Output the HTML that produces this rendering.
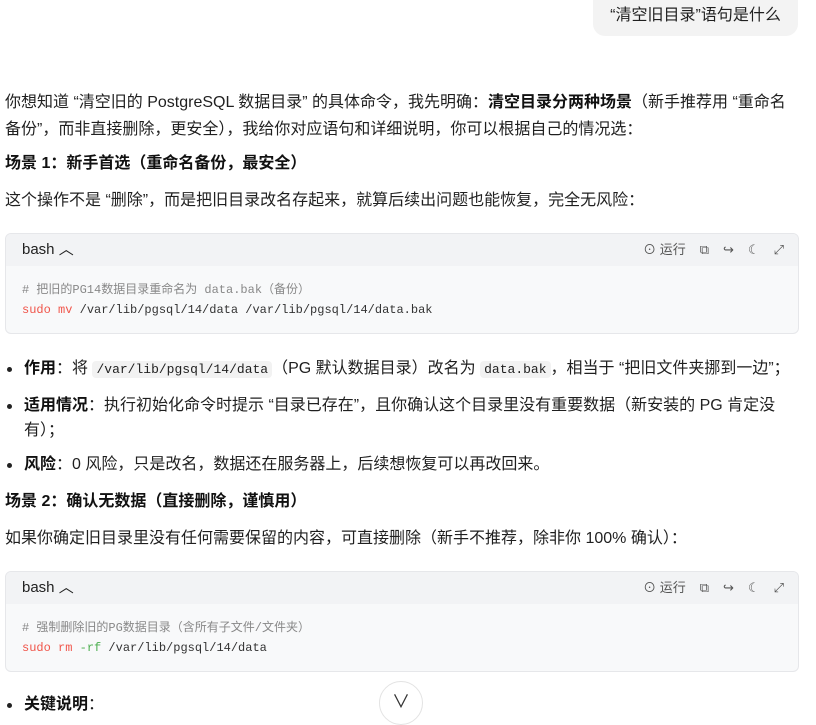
<!DOCTYPE html><html><head><meta charset="utf-8"><style>
body{margin:0;width:816px;height:705px;overflow:hidden;background:#fff;font-family:"Liberation Sans","Noto Sans CJK SC",sans-serif;color:#1f1f1f;font-size:16px;position:relative}
.a{position:absolute;left:5px;white-space:nowrap;line-height:27px}
b{font-weight:700;color:#111}
.bub{position:absolute;left:593px;top:0;width:205px;height:36px;background:#f3f3f3;border-radius:0 0 12px 12px;font-size:16px;line-height:32px;text-align:center}
.code{position:absolute;left:5px;width:792px;border:1px solid #e6e7ea;border-radius:6px;background:#f8f9fa;overflow:hidden}
.hd{height:32px;background:#f2f3f5;position:relative;font-size:15px;line-height:32px;padding-left:16px;color:#222}
.tools{position:absolute;right:14px;top:0;font-size:13px;color:#555;word-spacing:0}
.tools span{margin-left:14px}
pre{margin:0;padding:14px 16px;font-family:"Liberation Mono","Noto Sans CJK SC",monospace;font-size:12px;line-height:20px;color:#333}
.cm{color:#888}.kw{color:#f0554a}.gr{color:#4caf50}
.li{position:absolute;left:24px;line-height:25px;white-space:nowrap}
.li.d:before{content:"";position:absolute;left:-17px;top:11px;width:5px;height:5px;border-radius:50%;background:#222}
code{font-family:"Liberation Mono",monospace;font-size:13px;background:#f2f2f2;border-radius:4px;padding:1px 4px}
</style></head><body>
<div class="bub">“清空旧目录”语句是什么</div>
<div class="a" style="top:89px">你想知道 “清空旧的 PostgreSQL 数据目录” 的具体命令，我先明确：<b>清空目录分两种场景</b>（新手推荐用 “重命名</div>
<div class="a" style="top:116px">备份”，而非直接删除，更安全），我给你对应语句和详细说明，你可以根据自己的情况选：</div>
<div class="a" style="top:150px"><b>场景 1：新手首选（重命名备份，最安全）</b></div>
<div class="a" style="top:187px">这个操作不是 “删除”，而是把旧目录改名存起来，就算后续出问题也能恢复，完全无风险：</div>
<div class="code" style="top:233px;height:99px"><div class="hd">bash ︿<div class="tools">⊙ 运行<span>⧉</span><span>↪</span><span>☾</span><span>⤢</span></div></div>
<pre><span class="cm"># 把旧的PG14数据目录重命名为 data.bak（备份）</span>
<span class="kw">sudo mv</span> /var/lib/pgsql/14/data /var/lib/pgsql/14/data.bak</pre></div>
<div class="li d" style="top:356px"><b>作用</b>：将 <code>/var/lib/pgsql/14/data</code>（PG 默认数据目录）改名为 <code>data.bak</code>，相当于 “把旧文件夹挪到一边”；</div>
<div class="li d" style="top:393px"><b>适用情况</b>：执行初始化命令时提示 “目录已存在”，且你确认这个目录里没有重要数据（新安装的 PG 肯定没</div>
<div class="li" style="top:418px">有）；</div>
<div class="li d" style="top:452px"><b>风险</b>：0 风险，只是改名，数据还在服务器上，后续想恢复可以再改回来。</div>
<div class="a" style="top:488px"><b>场景 2：确认无数据（直接删除，谨慎用）</b></div>
<div class="a" style="top:525px">如果你确定旧目录里没有任何需要保留的内容，可直接删除（新手不推荐，除非你 100% 确认）：</div>
<div class="code" style="top:571px;height:99px"><div class="hd">bash ︿<div class="tools">⊙ 运行<span>⧉</span><span>↪</span><span>☾</span><span>⤢</span></div></div>
<pre><span class="cm"># 强制删除旧的PG数据目录（含所有子文件/文件夹）</span>
<span class="kw">sudo rm</span> <span class="gr">-rf</span> /var/lib/pgsql/14/data</pre></div>
<div class="li d" style="top:692px"><b>关键说明</b>：</div>
<div style="position:absolute;left:379px;top:681px;width:42px;height:42px;border-radius:50%;border:1px solid #e3e3e3;background:#fff;text-align:center;line-height:40px;font-size:18px;color:#333">∨</div>
</body></html>
